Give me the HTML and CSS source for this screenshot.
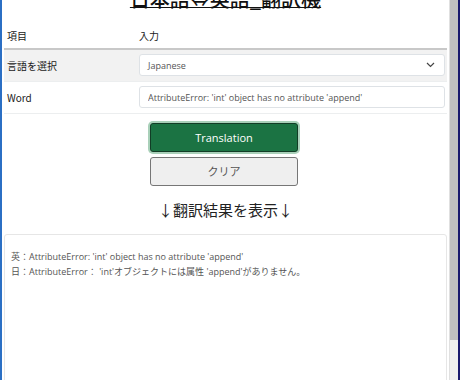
FILE: index.html
```html
<!DOCTYPE html>
<html lang="ja">
<head>
    <meta charset="UTF-8">
    <title>日本語⇔英語_翻訳機</title>
    <link rel="stylesheet" href="styles.css">
</head>
<body>
    <div class="window">
        <div class="page">
            <h1 class="title">日本語⇔英語_翻訳機</h1>

            <table class="form-table">
                <thead>
                    <tr>
                        <th class="col-label">項目</th>
                        <th>入力</th>
                    </tr>
                </thead>
                <tbody>
                    <tr class="striped">
                        <td>言語を選択</td>
                        <td>
                            <div class="select">
                                <span>Japanese</span>
                                <svg width="9" height="6" viewBox="0 0 9 6"><path d="M1 1l3.5 3.5L8 1" fill="none" stroke="#444" stroke-width="1.2"/></svg>
                            </div>
                        </td>
                    </tr>
                    <tr>
                        <td>Word</td>
                        <td>
                            <input type="text" class="text-input" value="AttributeError: 'int' object has no attribute 'append'">
                        </td>
                    </tr>
                </tbody>
            </table>

            <div class="actions">
                <button class="btn btn-primary">Translation</button>
                <button class="btn btn-clear">クリア</button>
            </div>

            <p class="result-heading">↓翻訳結果を表示↓</p>

            <div class="result">
                <p>英：AttributeError: 'int' object has no attribute 'append'</p>
                <p>日：AttributeError： 'int'オブジェクトには属性 'append'がありません。</p>
            </div>
        </div>
        <div class="scrollbar">
            <div class="thumb"></div>
        </div>
    </div>
</body>
</html>
```

FILE: styles.css
```css
:root {
    --frame-blue: #2b6fc4;
    --frame-navy: #1a1a6e;
    --green: #1b7343;
    --border: #dee2e6;
    --text: #212529;
}

* {
    margin: 0;
    padding: 0;
    box-sizing: border-box;
}

body {
    font-family: "Open Sans", "Noto Sans CJK JP", sans-serif;
    color: var(--text);
    background: #fff;
    overflow: hidden;
}

.window {
    display: flex;
    height: 380px;
    border-left: 2px solid var(--frame-blue);
    border-right: 2px solid var(--frame-navy);
}

.page {
    flex: 1;
    padding: 0 2px;
    overflow: hidden;
}

.title {
    margin-top: -13px;
    text-align: center;
    font-family: "Noto Sans CJK JP", sans-serif;
    font-size: 20px;
    font-weight: 500;
    line-height: 24px;
    text-decoration: underline;
    text-decoration-thickness: 1px;
    text-underline-offset: 0px;
    color: #111;
}

/* 入力フォーム */
.form-table {
    width: 100%;
    margin-top: 18px;
    border-collapse: collapse;
    font-family: "Noto Sans CJK JP", sans-serif;
    font-size: 10px;
    color: #1a1a1a;
}

.form-table th {
    text-align: left;
    font-weight: 400;
    line-height: 14px;
    padding: 0 4px 5px 3px;
    border-bottom: 2px solid #c8c8c8;
}

.form-table td {
    padding: 0 2px 0 3px;
    border-bottom: 1px solid #eceeef;
    height: 32px;
}

.col-label {
    width: 132px;
}

.striped td {
    background: #f2f2f2;
}

.select,
.text-input {
    display: flex;
    align-items: center;
    justify-content: space-between;
    width: 100%;
    height: 22px;
    padding: 0 9px 0 8px;
    border: 1px solid var(--border);
    border-radius: 3px;
    background: #fff;
    font-family: "Open Sans", "Noto Sans CJK JP", sans-serif;
    font-size: 9px;
    color: #555;
}

.text-input {
    outline: none;
}

/* ボタン */
.actions {
    display: flex;
    flex-direction: column;
    align-items: center;
    gap: 5px;
    margin-top: 9px;
    padding-right: 3px;
}

.btn {
    width: 148px;
    height: 29px;
    border-radius: 3px;
    font-family: "Open Sans", "Noto Sans CJK JP", sans-serif;
    font-size: 11px;
    cursor: pointer;
}

.btn-primary {
    background: var(--green);
    color: #fff;
    border: 1px solid #123d26;
    box-shadow: 0 0 0 2px #a9d0b9;
}

.btn-clear {
    background: #efefef;
    color: #555;
    border: 1px solid #767676;
    font-family: "Noto Sans CJK JP", sans-serif;
}

.result-heading {
    margin-top: 13px;
    text-align: center;
    font-family: "Noto Sans CJK JP", sans-serif;
    font-size: 15px;
    line-height: 22px;
    color: #222;
}

/* 翻訳結果 */
.result {
    margin-top: 13px;
    height: 200px;
    padding: 14px 6px;
    border: 1px solid #e6e6e6;
    border-radius: 3px;
    font-family: "Open Sans", "Noto Sans CJK JP", sans-serif;
    font-size: 9px;
    line-height: 15px;
    color: #555;
}

.scrollbar {
    width: 9px;
    background: #efefef;
    border-left: 1px solid #e0e0e0;
}

.thumb {
    height: 340px;
    background: #c1c1c1;
}
```
